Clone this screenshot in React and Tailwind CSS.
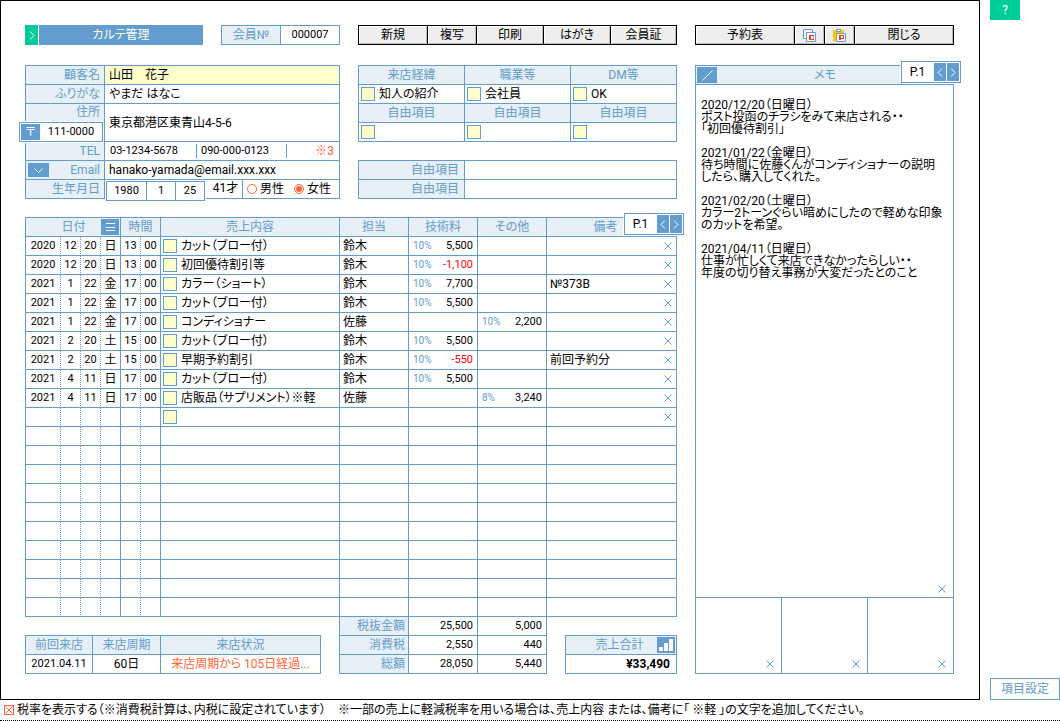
import React, { useState } from "react";

// ── Data ──────────────────────────────────────────────────────────────────────
const SALES = [
  { date: ["2020", "12", "20", "日"], time: ["13", "00"], item: "カット（ブロー付）", staff: "鈴木", tech: ["10%", "5,500"] },
  { date: ["2020", "12", "20", "日"], time: ["13", "00"], item: "初回優待割引等", staff: "鈴木", tech: ["10%", "-1,100"] },
  { date: ["2021", "1", "22", "金"], time: ["17", "00"], item: "カラー（ショート）", staff: "鈴木", tech: ["10%", "7,700"], note: "№373B" },
  { date: ["2021", "1", "22", "金"], time: ["17", "00"], item: "カット（ブロー付）", staff: "鈴木", tech: ["10%", "5,500"] },
  { date: ["2021", "1", "22", "金"], time: ["17", "00"], item: "コンディショナー", staff: "佐藤", other: ["10%", "2,200"] },
  { date: ["2021", "2", "20", "土"], time: ["15", "00"], item: "カット（ブロー付）", staff: "鈴木", tech: ["10%", "5,500"] },
  { date: ["2021", "2", "20", "土"], time: ["15", "00"], item: "早期予約割引", staff: "鈴木", tech: ["10%", "-550"], note: "前回予約分" },
  { date: ["2021", "4", "11", "日"], time: ["17", "00"], item: "カット（ブロー付）", staff: "鈴木", tech: ["10%", "5,500"] },
  { date: ["2021", "4", "11", "日"], time: ["17", "00"], item: "店販品（サプリメント）※軽", staff: "佐藤", other: ["8%", "3,240"] },
];

const ROW_COUNT = 20;

const MEMO = `2020/12/20（日曜日）
ポスト投函のチラシをみて来店される・・
「初回優待割引」

2021/01/22（金曜日）
待ち時間に佐藤くんがコンディショナーの説明
したら、購入してくれた。

2021/02/20（土曜日）
カラー2トーンぐらい暗めにしたので軽めな印象
のカットを希望。

2021/04/11（日曜日）
仕事が忙しくて来店できなかったらしい・・
年度の切り替え事務が大変だったとのこと`;

const TOTALS = [
  { label: "税抜金額", tech: "25,500", other: "5,000" },
  { label: "消費税", tech: "2,550", other: "440" },
  { label: "総額", tech: "28,050", other: "5,440" },
];

// ── Shared classes ────────────────────────────────────────────────────────────
const TABLE = "w-full table-fixed border-separate border-spacing-0 border-l border-t border-[#639cce]";
const TH = "h-[19px] border-r border-b border-[#639cce] bg-[#e7eff7] p-0 font-normal leading-4 text-[#639cce]";
const TD = "h-[19px] border-r border-b border-[#639cce] p-0 leading-4";
const NUM = "text-[11px]";

// ── Icons ─────────────────────────────────────────────────────────────────────
function Cross({ className = "" }) {
  return (
    <svg width="8" height="8" viewBox="0 0 8 8" className={className} stroke="currentColor" fill="none">
      <path d="M0.5 0.5l7 7M7.5 0.5l-7 7" />
    </svg>
  );
}

function Chevron({ dir }) {
  const d = { left: "M5 0.5L1 4.5l4 4", right: "M1 0.5l4 4-4 4" }[dir];
  return (
    <svg width="6" height="9" viewBox="0 0 6 9" stroke="currentColor" fill="none">
      <path d={d} />
    </svg>
  );
}

function CopyIcon() {
  return (
    <svg width="13" height="13" viewBox="0 0 13 13" fill="none">
      <path d="M0.5 0.5h9v9h-9z" fill="#fff" stroke="#639cce" />
      <path d="M3.5 3.5h9v9h-9z" fill="#fff" stroke="#639cce" />
      <path d="M6 6h5v2h-1V7H8v3h2V9h1v2H6z" fill="#f33" />
    </svg>
  );
}

function PasteIcon() {
  return (
    <svg width="13" height="13" viewBox="0 0 13 13" fill="none">
      <path d="M0 1h11v11H0z" fill="#fc0" />
      <path d="M3.5 0.5h4v2h-4z" fill="#fff" stroke="#639cce" />
      <path d="M3.5 4.5h9v8h-9z" fill="#fff" stroke="#639cce" />
      <path d="M6 6h5v4H8v1H6zM8 7v2h2V7z" fill="#f33" fillRule="evenodd" />
    </svg>
  );
}

// ── Small parts ───────────────────────────────────────────────────────────────
function Check({ label }) {
  return (
    <input
      type="checkbox"
      aria-label={label}
      className="m-0 size-[14px] shrink-0 appearance-none border border-[#639cce] bg-[#ffffcc] checked:bg-[#639cce]"
    />
  );
}

function ToolButton({ children, label }) {
  return (
    <button
      aria-label={label}
      className="flex h-[18px] items-center justify-center border border-t-white border-r-[#bbb] border-b-[#bbb] border-l-white bg-[#eee] leading-4"
    >
      {children}
    </button>
  );
}

function Pager({ name }) {
  const arrow = "flex h-[18px] w-3 items-center justify-center bg-[#639cce] text-white";
  return (
    <div className="absolute -top-1 -right-[7px] flex h-[22px] w-[60px] items-center gap-px border border-[#639cce] bg-white pr-px ring-1 ring-white">
      <span className="flex-1 text-center">P.1</span>
      <button className={arrow} aria-label={`${name} 前のページ`}><Chevron dir="left" /></button>
      <button className={arrow} aria-label={`${name} 次のページ`}><Chevron dir="right" /></button>
    </div>
  );
}

function Amount({ value }) {
  if (!value) return <td className={TD} />;
  const [rate, amount] = value;
  return (
    <td className={TD}>
      <div className={`flex justify-between pr-1 pl-1 ${NUM}`}>
        <span className="text-[10px] text-[#639cce]">{rate}</span>
        <span className={amount.startsWith("-") ? "text-[#f00]" : ""}>{amount}</span>
      </div>
    </td>
  );
}

// ── Customer block ────────────────────────────────────────────────────────────
function CustomerTable() {
  const [sex, setSex] = useState("女性");
  const label = `${TH} pr-1 text-right`;
  const field = "block h-4 w-full bg-transparent pl-1 outline-none";
  const birth = `min-w-0 text-center outline-none ${NUM}`;

  return (
    <table className={TABLE}>
      <colgroup>
        <col className="w-[79px]" />
        <col />
      </colgroup>
      <tbody>
        <tr>
          <th className={label}><label htmlFor="name">顧客名</label></th>
          <td className={`${TD} bg-[#ffffcc]`}><input id="name" className={field} defaultValue="山田　花子" /></td>
        </tr>
        <tr>
          <th className={label}><label htmlFor="kana">ふりがな</label></th>
          <td className={TD}><input id="kana" className={field} defaultValue="やまだ はなこ" /></td>
        </tr>
        <tr>
          <th rowSpan={2} className={`${label} relative h-[38px] align-top`}>
            <label htmlFor="address">住所</label>
            {/* Postal code, hangs over the table edge */}
            <div className="absolute top-[18px] -left-[7px] z-10 flex h-5 w-[84px] items-center border border-[#639cce] bg-white pl-px text-black ring-1 ring-white">
              <button className="h-4 w-[19px] shrink-0 bg-[#639cce] text-white" aria-label="郵便番号検索">〒</button>
              <input aria-label="郵便番号" className={`w-full min-w-0 text-center outline-none ${NUM}`} defaultValue="111-0000" />
            </div>
          </th>
          <td rowSpan={2} className={TD}><input id="address" className={field} defaultValue="東京都港区東青山4-5-6" /></td>
        </tr>
        <tr className="h-[19px]" />
        <tr>
          <th className={label}><label htmlFor="tel">TEL</label></th>
          <td className={TD}>
            <div className="flex h-[18px] items-center pr-[5px] pl-[5px]">
              <input id="tel" className={`w-[86px] outline-none ${NUM}`} defaultValue="03-1234-5678" />
              <input aria-label="携帯電話" className={`h-[14px] w-[91px] border-x border-[#639cce] pl-1 outline-none ${NUM}`} defaultValue="090-000-0123" />
              <span className="ml-auto text-[#f63]">※3</span>
            </div>
          </td>
        </tr>
        <tr>
          <th className={label}>
            <div className="flex items-center justify-between pl-0.5">
              <button className="flex h-[14px] w-[21px] items-center justify-center bg-[#639cce] text-white" aria-label="メール選択">
                <svg width="9" height="5" viewBox="0 0 9 5" stroke="currentColor" fill="none"><path d="M0.5 0.5l4 4 4-4" /></svg>
              </button>
              <label htmlFor="email">Email</label>
            </div>
          </th>
          <td className={TD}><input id="email" className={field} defaultValue="hanako-yamada@email.xxx.xxx" /></td>
        </tr>
        <tr>
          <th className={label}><label htmlFor="year">生年月日</label></th>
          <td className={TD}>
            <div className="flex h-[18px] items-start pl-px leading-4">
              <div className="relative z-10 mt-px grid h-5 w-[99px] shrink-0 grid-cols-[39px_28px_28px] gap-px border border-[#639cce] bg-[#639cce] ring-1 ring-white">
                <input id="year" className={`bg-white ${birth}`} defaultValue="1980" />
                <input aria-label="月" className={`bg-white ${birth}`} defaultValue="1" />
                <input aria-label="日" className={`bg-white ${birth}`} defaultValue="25" />
              </div>
              <span className="w-[37px] pl-1 text-center">41才</span>
              <div className="flex h-[18px] flex-1 items-center justify-between border-l border-[#639cce] pr-2 pl-1">
                {["男性", "女性"].map(s => (
                  <label key={s} className="flex items-center gap-[3px]">
                    <input
                      type="radio"
                      name="sex"
                      checked={sex === s}
                      onChange={() => setSex(s)}
                      className="m-0 size-[10px] appearance-none rounded-full border border-[#f63] bg-clip-content p-px checked:bg-[#f63]"
                    />
                    {s}
                  </label>
                ))}
              </div>
            </div>
          </td>
        </tr>
      </tbody>
    </table>
  );
}

function SurveyTables() {
  return (
    <div className="flex flex-col gap-[18px]">
      <table className={TABLE}>
        <tbody>
          <tr>
            {["来店経緯", "職業等", "DM等"].map(h => <th key={h} className={TH}>{h}</th>)}
          </tr>
          <tr>
            {["知人の紹介", "会社員", "OK"].map(v => (
              <td key={v} className={TD}>
                <div className="flex items-center gap-1 pl-0.5"><Check label={v} />{v}</div>
              </td>
            ))}
          </tr>
          <tr>
            {[1, 2, 3].map(n => <th key={n} className={TH}>自由項目</th>)}
          </tr>
          <tr>
            {[1, 2, 3].map(n => (
              <td key={n} className={TD}>
                <div className="flex items-center pl-0.5"><Check label={`自由項目${n}`} /></div>
              </td>
            ))}
          </tr>
        </tbody>
      </table>
      <table className={TABLE}>
        <tbody>
          {[4, 5].map(n => (
            <tr key={n}>
              <th className={`${TH} w-1/3 pr-[5px] text-right`}>自由項目</th>
              <td className={TD}>
                <input aria-label={`自由項目${n}`} className="block h-[18px] w-full pl-1 outline-none" />
              </td>
            </tr>
          ))}
        </tbody>
      </table>
    </div>
  );
}

// ── Sales block ───────────────────────────────────────────────────────────────
function SalesTable() {
  const dotted = `h-[19px] border-r border-b border-[#639cce] [border-right-style:dotted] p-0 text-center leading-4 ${NUM}`;
  const rows = Array.from({ length: ROW_COUNT }, (_, i) => SALES[i] || {});

  return (
    <div className="relative">
      <table className={TABLE}>
        <colgroup>
          <col className="w-[35px]" />
          <col className="w-5" />
          <col className="w-5" />
          <col className="w-5" />
          <col className="w-5" />
          <col className="w-5" />
          <col />
          <col className="w-[69px]" />
          <col className="w-[69px]" />
          <col className="w-[69px]" />
          <col className="w-[130px]" />
        </colgroup>
        <thead>
          <tr>
            <th colSpan={4} className={TH}>
              <div className="flex items-center pr-px">
                <span className="flex-1 pl-5">日付</span>
                <button className="flex h-4 w-[18px] items-center justify-center bg-[#639cce] text-white" aria-label="並べ替え">
                  <svg width="9" height="8" viewBox="0 0 9 8" stroke="currentColor"><path d="M0 0.5h9M0 4h9M0 7.5h9" shapeRendering="crispEdges" /></svg>
                </button>
              </div>
            </th>
            <th colSpan={2} className={TH}>時間</th>
            <th className={TH}>売上内容</th>
            <th className={TH}>担当</th>
            <th className={TH}>技術料</th>
            <th className={TH}>その他</th>
            <th className={`${TH} pr-3`}>備考</th>
          </tr>
        </thead>
        <tbody>
          {rows.map((r, i) => (
            <tr key={i}>
              <td className={dotted}>{r.date?.[0]}</td>
              <td className={dotted}>{r.date?.[1]}</td>
              <td className={dotted}>{r.date?.[2]}</td>
              <td className={`${TD} text-center`}>{r.date?.[3]}</td>
              <td className={dotted}>{r.time?.[0]}</td>
              <td className={`${TD} text-center ${NUM}`}>{r.time?.[1]}</td>
              <td className={TD}>
                {/* one spare line after the last entry */}
                {i <= SALES.length && (
                  <div className="flex items-center gap-1 pl-0.5"><Check label={`${i + 1}行目`} />{r.item}</div>
                )}
              </td>
              <td className={`${TD} pl-[3px]`}>{r.staff}</td>
              <Amount value={r.tech} />
              <Amount value={r.other} />
              <td className={TD}>
                {i <= SALES.length && (
                  <div className="flex items-center justify-between pr-1 pl-[3px]">
                    <span>{r.note}</span>
                    <button className="text-[#639cce]" aria-label={`${i + 1}行目を削除`}><Cross /></button>
                  </div>
                )}
              </td>
            </tr>
          ))}
        </tbody>
      </table>
      <Pager name="売上" />
    </div>
  );
}

function Summary() {
  return (
    <div className="flex items-end gap-[18px]">
      <div className="flex-1">
        <table className={TABLE}>
          <colgroup>
            <col className="w-[67px]" />
            <col className="w-[68px]" />
            <col />
          </colgroup>
          <thead>
            <tr>
              <th className={TH}>前回来店</th>
              <th className={TH}>来店周期</th>
              <th className={TH}>来店状況</th>
            </tr>
          </thead>
          <tbody>
            <tr>
              <td className={`${TD} text-center ${NUM}`}>2021.04.11</td>
              <td className={`${TD} text-center`}>60日</td>
              <td className={`${TD} text-center text-[#f63]`}>来店周期から 105日経過...</td>
            </tr>
          </tbody>
        </table>
      </div>

      <table className="w-[208px] table-fixed border-separate border-spacing-0 border-l border-[#639cce]">
        <tbody>
          {TOTALS.map(t => (
            <tr key={t.label}>
              <th className={`${TH} pr-[3px] text-right`}>{t.label}</th>
              <td className={`${TD} pr-1 text-right ${NUM}`}>{t.tech}</td>
              <td className={`${TD} pr-1 text-right ${NUM}`}>{t.other}</td>
            </tr>
          ))}
        </tbody>
      </table>

      <div className="w-[112px]">
        <table className={TABLE}>
          <tbody>
            <tr>
              <th className={TH}>
                <div className="flex items-center pr-px">
                  <span className="flex-1 pl-4">売上合計</span>
                  <button className="bg-[#639cce]" aria-label="売上グラフ">
                    <svg width="18" height="16" viewBox="0 0 18 16" fill="#fff"><path d="M2 10h4v4H2zM7 6h4v8H7zM12 2h4v12h-4z" /></svg>
                  </button>
                </div>
              </th>
            </tr>
            <tr>
              <td className={`${TD} pr-[6px] text-right font-bold`}>¥33,490</td>
            </tr>
          </tbody>
        </table>
      </div>
    </div>
  );
}

// ── Memo column ───────────────────────────────────────────────────────────────
function MemoPanel() {
  return (
    <div className="relative flex flex-1 flex-col">
      <div className="flex h-5 items-center border border-[#639cce] bg-[#e7eff7] pl-px text-[#639cce]">
        <button className="flex h-4 w-5 items-center justify-center bg-[#639cce] text-white" aria-label="メモを編集">
          <svg width="11" height="11" viewBox="0 0 11 11" stroke="currentColor"><path d="M0.5 10.5l10-10" /></svg>
        </button>
        <label htmlFor="memo" className="flex-1 pr-5 text-center leading-4">メモ</label>
      </div>
      <div className="flex flex-1 flex-col border-x border-[#639cce]">
        <textarea id="memo" className="w-full flex-1 resize-none pt-[14px] pr-1 pl-[5px] leading-3 outline-none" defaultValue={MEMO} />
        <button className="self-end p-1 pr-[7px] text-[#639cce]" aria-label="メモを消去"><Cross /></button>
      </div>
      <div className="grid h-[77px] grid-cols-3 gap-px border border-[#639cce] bg-[#639cce]">
        {[1, 2, 3].map(n => (
          <div key={n} className="flex items-end justify-end bg-white pr-[7px] pb-[5px]">
            <button className="text-[#639cce]" aria-label={`画像${n}を消去`}><Cross /></button>
          </div>
        ))}
      </div>
      <Pager name="メモ" />
    </div>
  );
}

export default function App() {
  return (
    <div className="bg-white font-['Roboto','Noto_Sans_CJK_JP',sans-serif] text-[12px] leading-4 text-black [font-feature-settings:'palt']">
      <div className="flex gap-[10px]">
        <main className="flex flex-1 gap-[18px] border border-black pt-6 pr-[25px] pb-[25px] pl-6">
          {/* Left: customer + sales */}
          <div className="min-w-0 flex-1">
            <div className="mb-5 grid grid-cols-[315fr_319fr] gap-[18px]">
              <div className="flex h-5">
                <button className="mr-px flex w-[13px] items-center justify-center bg-[#0c9] text-white" aria-label="メニュー"><Chevron dir="right" /></button>
                <h1 className="flex-1 bg-[#639cce] text-center leading-5 text-white">カルテ管理</h1>
                <div className="ml-[18px] flex w-[119px] border border-[#639cce] leading-[18px]">
                  <label htmlFor="member" className="w-[59px] border-r border-[#639cce] bg-[#e7eff7] text-center text-[#639cce]">会員№</label>
                  <input id="member" className={`min-w-0 flex-1 text-center outline-none ${NUM}`} defaultValue="000007" />
                </div>
              </div>
              <div className="grid grid-cols-[68fr_48fr_66fr_66fr_65fr] gap-px bg-black p-px">
                <ToolButton>新規</ToolButton>
                <ToolButton>複写</ToolButton>
                <ToolButton>印刷</ToolButton>
                <ToolButton>はがき</ToolButton>
                <ToolButton>会員証</ToolButton>
              </div>
            </div>

            <div className="mb-[18px] grid grid-cols-[315fr_319fr] items-start gap-[18px]">
              <CustomerTable />
              <SurveyTables />
            </div>

            <SalesTable />
            <Summary />
          </div>

          {/* Right: memo */}
          <div className="flex w-[259px] flex-col gap-5">
            <div className="grid grid-cols-[98fr_29fr_29fr_98fr] gap-px bg-black p-px">
              <ToolButton>予約表</ToolButton>
              <ToolButton label="コピー"><CopyIcon /></ToolButton>
              <ToolButton label="貼り付け"><PasteIcon /></ToolButton>
              <ToolButton>閉じる</ToolButton>
            </div>
            <MemoPanel />
          </div>
        </main>

        <aside className="flex w-[70px] flex-col items-start justify-between">
          <button className="h-5 w-[30px] bg-[#0c9] text-white" aria-label="ヘルプ">?</button>
          <button className="h-[22px] w-full border border-[#639cce] text-[#639cce]">項目設定</button>
        </aside>
      </div>

      <footer className="flex h-[21px] items-center border-b border-dotted border-black pl-1">
        <label className="flex items-center gap-[3px] whitespace-nowrap">
          <span className="grid size-[10px] place-items-center">
            <input
              type="checkbox"
              defaultChecked
              className="peer col-start-1 row-start-1 m-0 size-[10px] appearance-none border border-[#f63]"
            />
            <Cross className="pointer-events-none col-start-1 row-start-1 hidden text-[#f63] peer-checked:block" />
          </span>
          税率を表示する（※消費税計算は、内税に設定されています）　※一部の売上に軽減税率を用いる場合は、売上内容 または、備考に「 ※軽 」の文字を追加してください。
        </label>
      </footer>
    </div>
  );
}
